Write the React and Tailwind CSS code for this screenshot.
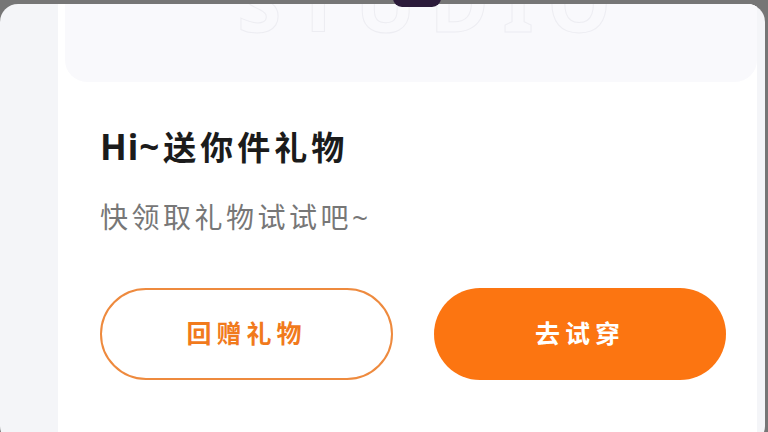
import React from "react";

const font = { fontFamily: '"Noto Sans", "Noto Sans CJK SC", sans-serif' };

const GiftSheet = () => {
  return (
    <div className="relative w-[768px] h-[432px] overflow-hidden bg-[#767676] pt-[4px]" style={font}>
      {/* avatar edge peeking over the sheet */}
      <div className="absolute left-[393px] top-[-11px] w-[48px] h-[18px] rounded-full bg-[#2b1a3a] z-10" />

      <div className="mr-[3px] h-[440px] rounded-[18px] bg-[#f4f5f8] flex overflow-hidden">
        <div className="ml-[58px] mr-[8px] flex-1 bg-white flex flex-col">
          {/* top banner */}
          <div className="ml-[7px] h-[78px] rounded-b-[22px] bg-[#f9f9fc] overflow-hidden flex justify-center">
            <div className="mt-[-38px] pl-[40px] text-[80px] font-bold leading-[70px] tracking-[14px] text-transparent [-webkit-text-stroke:1px_#ededf2]">
              STUDIO
            </div>
          </div>

          <div className="pl-[42px]">
            <h1 className="mt-[45px] text-[33px] leading-[40px] font-bold text-[#1b1b1b]">
              <span className="text-[35px] tracking-[1px]">Hi~</span>
              <span className="ml-[3px] tracking-[4px]">送你件礼物</span>
            </h1>
            <p className="mt-[31px] text-[28px] leading-[36px] tracking-[3.5px] text-[#777777]">
              快领取礼物试试吧~
            </p>

            <div className="mt-[53px] flex gap-[41px]">
              <button className="w-[293px] h-[92px] rounded-full border-2 border-[#ee8a3e] bg-white text-[25px] font-bold tracking-[5px] text-[#f17a1c]">
                回赠礼物
              </button>
              <button className="w-[292px] h-[92px] rounded-full bg-[#fc7511] text-[25px] font-bold tracking-[5px] text-white">
                去试穿
              </button>
            </div>
          </div>
        </div>
      </div>
    </div>
  );
};

export default GiftSheet;
